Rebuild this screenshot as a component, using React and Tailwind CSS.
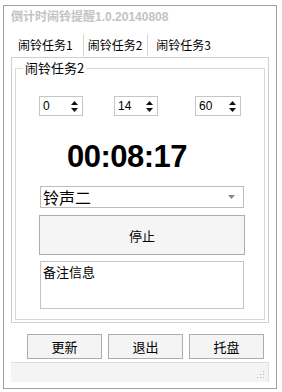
import React from 'react'

const cjk = { fontFamily: '"Noto Sans CJK SC", "Liberation Sans", sans-serif' }

const SpinArrows = () => (
    <svg width="7" height="11" viewBox="0 0 7 11" className="shrink-0">
        <polygon points="3.5,0 7,4 0,4" fill="#111" />
        <polygon points="0,7 7,7 3.5,11" fill="#111" />
    </svg>
)

const SpinBox = ({ value, className }) => (
    <div className={`w-[44px] h-[20px] border border-[#c6c6c6] bg-white flex items-center justify-between pl-[3px] pr-[4px] ${className}`}>
        <span className="text-[12px] leading-none text-black font-['Liberation_Sans',sans-serif]">{value}</span>
        <SpinArrows />
    </div>
)

const BottomButton = ({ label, className = '' }) => (
    <button className={`w-[75px] h-[25px] border border-[#adadad] bg-[#f4f4f4] flex items-center justify-center text-[13px] leading-none text-black ${className}`} style={cjk}>
        {label}
    </button>
)

const App = () => {
    return (
        <div className="w-[282px] h-[392px] bg-white overflow-hidden pt-[5px] pl-[3px]" style={cjk}>
            {/* WINDOW */}
            <div className="w-[274px] h-[384px] border border-[#9f9f9f] flex flex-col">

                {/* TITLE */}
                <div className="mt-[2px] pl-[7px] h-[16px] text-[12px] leading-[16px] font-bold text-[#c3c3c3] whitespace-nowrap">
                    倒计时闹铃提醒<span className="font-['Liberation_Sans',sans-serif]">1.0.20140808</span>
                </div>

                {/* TABS */}
                <div className="mt-[10px] h-[22px] flex items-center text-[12px] leading-none text-black whitespace-nowrap">
                    <span className="ml-[14px]">闹铃任务1</span>
                    <span className="ml-[10px] w-px h-[22px] bg-[#d6d6d6]" />
                    <span className="ml-[4px]">闹铃任务2</span>
                    <span className="ml-[5px] w-px h-[22px] bg-[#d6d6d6]" />
                    <span className="ml-[8px]">闹铃任务3</span>
                </div>

                {/* TAB PANEL */}
                <div className="mt-[1px] ml-[7px] w-[258px] h-[266px] border border-[#cfcfcf] pt-[10px] pl-[3px]">

                    {/* GROUP BOX */}
                    <div className="relative w-[250px] h-[252px] border border-[#d9d9d9] flex flex-col">
                        <span className="absolute -top-[9px] left-[7px] bg-white px-[2px] text-[13px] leading-[16px] text-black">闹铃任务2</span>

                        {/* SPIN BOXES */}
                        <div className="mt-[27px] flex">
                            <SpinBox value="0" className="ml-[23px]" />
                            <SpinBox value="14" className="ml-[31px]" />
                            <SpinBox value="60" className="ml-[37px] w-[46px]" />
                        </div>

                        {/* TIME */}
                        <div className="mt-[23px] pl-[51px] h-[36px] text-[31px] leading-[36px] font-bold text-black font-['Liberation_Sans',sans-serif] tracking-[-0.5px]">
                            00:08:17
                        </div>

                        {/* RINGTONE SELECT */}
                        <div className="mt-[11px] ml-[24px] w-[204px] h-[22px] border border-[#bdbdbd] bg-white flex items-center justify-between pl-[2px] pr-[8px]">
                            <span className="text-[16px] leading-none text-black">铃声二</span>
                            <svg width="7" height="4" viewBox="0 0 7 4">
                                <polygon points="0,0 7,0 3.5,4" fill="#8a8a8a" />
                            </svg>
                        </div>

                        {/* STOP */}
                        <button className="mt-[7px] ml-[23px] w-[206px] h-[40px] border border-[#adadad] bg-[#f5f5f5] flex items-center justify-center text-[13px] leading-none text-black">
                            停止
                        </button>

                        {/* NOTES */}
                        <div className="mt-[6px] ml-[24px] w-[204px] h-[48px] border border-[#c4c4c4] bg-white pl-[2px] pt-[2px] text-[13px] leading-[16px] text-black">
                            备注信息
                        </div>
                    </div>
                </div>

                {/* BOTTOM BUTTONS */}
                <div className="mt-[11px] ml-[23px] flex gap-[6px]">
                    <BottomButton label="更新" />
                    <BottomButton label="退出" />
                    <BottomButton label="托盘" />
                </div>

                {/* STATUS BAR */}
                <div className="mt-[3px] ml-[7px] w-[258px] h-[20px] border-t border-[#dcdcdc] border-r border-r-[#e2e2e2] bg-[#f3f3f3] flex items-end justify-end pr-[3px] pb-[3px]">
                    <svg width="8" height="8" viewBox="0 0 8 8">
                        <rect x="6" y="0" width="1" height="1" fill="#b5b5b5" />
                        <rect x="3" y="3" width="1" height="1" fill="#b5b5b5" />
                        <rect x="6" y="3" width="1" height="1" fill="#b5b5b5" />
                        <rect x="0" y="6" width="1" height="1" fill="#b5b5b5" />
                        <rect x="3" y="6" width="1" height="1" fill="#b5b5b5" />
                        <rect x="6" y="6" width="1" height="1" fill="#b5b5b5" />
                    </svg>
                </div>
            </div>
        </div>
    )
}

export default App
